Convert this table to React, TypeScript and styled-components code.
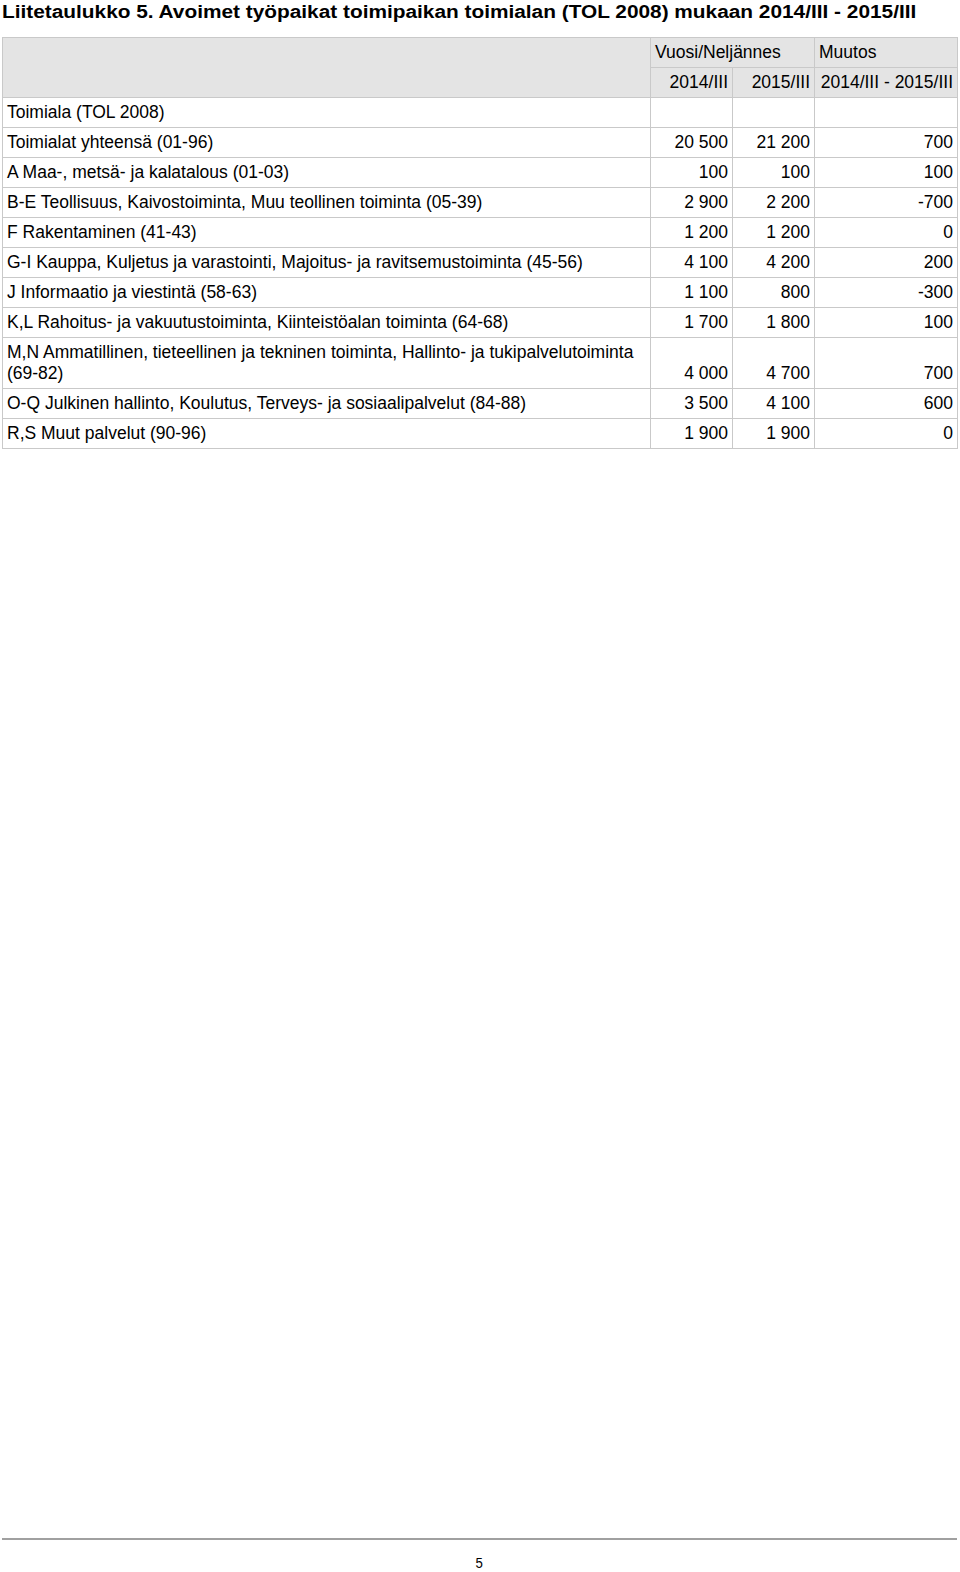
import styled, { createGlobalStyle } from 'styled-components'

const GlobalStyle = createGlobalStyle`
  html, body {
    margin: 0;
    padding: 0;
    background: #ffffff;
  }
  body {
    font-family: 'Liberation Sans', Arial, sans-serif;
    color: #000000;
  }
`

type Row = {
  label: string
  a: string
  b: string
  change: string
}

const rows: Row[] = [
  { label: 'Toimialat yhteensä (01-96)', a: '20 500', b: '21 200', change: '700' },
  { label: 'A Maa-, metsä- ja kalatalous (01-03)', a: '100', b: '100', change: '100' },
  { label: 'B-E Teollisuus, Kaivostoiminta, Muu teollinen toiminta (05-39)', a: '2 900', b: '2 200', change: '-700' },
  { label: 'F Rakentaminen (41-43)', a: '1 200', b: '1 200', change: '0' },
  { label: 'G-I Kauppa, Kuljetus ja varastointi, Majoitus- ja ravitsemustoiminta (45-56)', a: '4 100', b: '4 200', change: '200' },
  { label: 'J Informaatio ja viestintä (58-63)', a: '1 100', b: '800', change: '-300' },
  { label: 'K,L Rahoitus- ja vakuutustoiminta, Kiinteistöalan toiminta (64-68)', a: '1 700', b: '1 800', change: '100' },
  { label: 'M,N Ammatillinen, tieteellinen ja tekninen toiminta, Hallinto- ja tukipalvelutoiminta (69-82)', a: '4 000', b: '4 700', change: '700' },
  { label: 'O-Q Julkinen hallinto, Koulutus, Terveys- ja sosiaalipalvelut (84-88)', a: '3 500', b: '4 100', change: '600' },
  { label: 'R,S Muut palvelut (90-96)', a: '1 900', b: '1 900', change: '0' },
]

export default function App() {
  return (
    <>
      <GlobalStyle />
      <Page>
        <Title>Liitetaulukko 5. Avoimet työpaikat toimipaikan toimialan (TOL 2008) mukaan 2014/III - 2015/III</Title>
        <Table>
          <colgroup>
            <col style={{ width: 648 }} />
            <col style={{ width: 82 }} />
            <col style={{ width: 82 }} />
            <col style={{ width: 143 }} />
          </colgroup>
          <thead>
            <tr>
              <HeadCell rowSpan={2} />
              <HeadCell colSpan={2}>Vuosi/Neljännes</HeadCell>
              <HeadCell>Muutos</HeadCell>
            </tr>
            <tr>
              <HeadCell $right>2014/III</HeadCell>
              <HeadCell $right>2015/III</HeadCell>
              <HeadCell $right>2014/III - 2015/III</HeadCell>
            </tr>
          </thead>
          <tbody>
            <tr>
              <Cell>Toimiala (TOL 2008)</Cell>
              <Cell />
              <Cell />
              <Cell />
            </tr>
            {rows.map((row) => (
              <tr key={row.label}>
                <Cell>{row.label}</Cell>
                <NumCell>{row.a}</NumCell>
                <NumCell>{row.b}</NumCell>
                <NumCell>{row.change}</NumCell>
              </tr>
            ))}
          </tbody>
        </Table>
        <Footer>
          <PageNumber>5</PageNumber>
        </Footer>
      </Page>
    </>
  )
}

const Page = styled.div`
  display: flex;
  flex-direction: column;
  height: 1572px;
  box-sizing: border-box;
  padding: 0 3px 0 2px;
  overflow: hidden;
`

const Title = styled.h1`
  margin: 0 0 13px;
  font-size: 17.5px;
  line-height: 24px;
  font-weight: bold;
  white-space: nowrap;
  transform: scaleX(1.19);
  transform-origin: left center;
`

const Table = styled.table`
  width: 955px;
  table-layout: fixed;
  border-collapse: collapse;
  font-size: 17.5px;
  line-height: 21px;
`

const HeadCell = styled.th<{ $right?: boolean }>`
  background: #e4e4e4;
  border: 1px solid #c9c9c9;
  padding: 4px;
  font-weight: normal;
  text-align: ${({ $right }) => ($right ? 'right' : 'left')};
  vertical-align: top;
  white-space: nowrap;
  height: 21px;
`

const Cell = styled.td`
  border: 1px solid #c9c9c9;
  padding: 4px;
  vertical-align: top;
  height: 21px;
`

const NumCell = styled(Cell)`
  text-align: right;
  vertical-align: bottom;
  white-space: nowrap;
`

const Footer = styled.footer`
  margin-top: auto;
  height: 34px;
  box-sizing: border-box;
  flex-shrink: 0;
  border-top: 2px solid #a0a0a0;
  display: flex;
  justify-content: center;
  align-items: flex-start;
  padding-top: 14px;
`

const PageNumber = styled.span`
  font-size: 15px;
  line-height: 17px;
  transform: scaleX(0.88);
`
